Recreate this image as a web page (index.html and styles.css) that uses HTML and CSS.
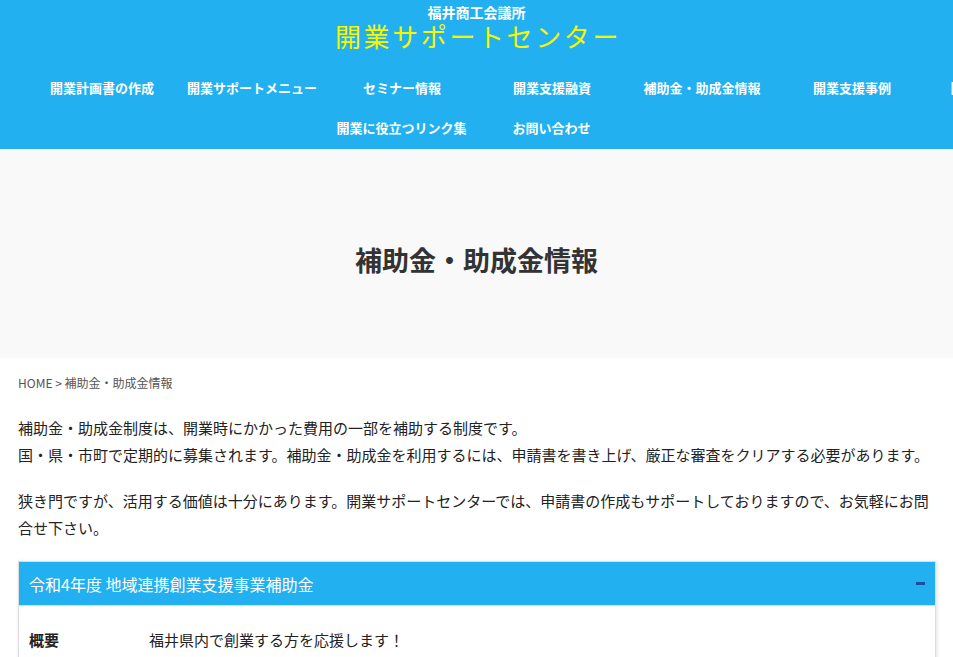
FILE: index.html
```html
<!DOCTYPE html>
<html lang="ja">
<head>
<meta charset="utf-8">
<title>補助金・助成金情報 | 開業サポートセンター</title>
<link rel="stylesheet" href="styles.css">
</head>
<body>
<header class="site-header">
  <div class="brand">
    <div class="brand-org">福井商工会議所</div>
    <div class="brand-title">開業サポートセンター</div>
  </div>
  <nav class="gnav">
    <ul class="gnav-row gnav-row-first">
      <li>開業計画書の作成</li>
      <li>開業サポートメニュー</li>
      <li>セミナー情報</li>
      <li>開業支援融資</li>
      <li>補助金・助成金情報</li>
      <li>開業支援事例</li>
      <li>開業スケジュール</li>
    </ul>
    <ul class="gnav-row gnav-row-second">
      <li>開業に役立つリンク集</li>
      <li>お問い合わせ</li>
    </ul>
  </nav>
</header>

<section class="hero">
  <h1 class="hero-title">補助金・助成金情報</h1>
</section>

<main class="content">
  <div class="breadcrumb">HOME &gt; 補助金・助成金情報</div>
  <p class="lead">補助金・助成金制度は、開業時にかかった費用の一部を補助する制度です。<br>国・県・市町で定期的に募集されます。補助金・助成金を利用するには、申請書を書き上げ、厳正な審査をクリアする必要があります。</p>
  <p class="lead">狭き門ですが、活用する価値は十分にあります。開業サポートセンターでは、申請書の作成もサポートしておりますので、お気軽にお問合せ下さい。</p>

  <div class="accordion">
    <div class="accordion-head">
      <span class="accordion-title">令和4年度 地域連携創業支援事業補助金</span>
      <span class="accordion-toggle"></span>
    </div>
    <div class="accordion-body">
      <div class="info-row">
        <div class="info-label">概要</div>
        <div class="info-value">福井県内で創業する方を応援します！</div>
      </div>
    </div>
  </div>
</main>
</body>
</html>
```

FILE: styles.css
```css
html, body {
  margin: 0;
  padding: 0;
}
body {
  font-family: "Noto Sans CJK JP", "Noto Sans", sans-serif;
  color: #222;
  background: #fff;
  overflow-x: hidden;
  width: 953px;
}
.site-header {
  background: #23b0f0;
  height: 149px;
  overflow: hidden;
}
.brand {
  text-align: center;
  padding-top: 4px;
}
.brand-org {
  color: #fff;
  font-weight: bold;
  font-size: 14px;
  line-height: 16px;
}
.brand-title {
  color: #f6f600;
  font-size: 26px;
  line-height: 28px;
  margin-top: 2px;
  letter-spacing: 2.6px;
  padding-left: 3px;
}
.gnav {
  margin-top: 18px;
}
.gnav-row {
  list-style: none;
  margin: 0;
  padding: 0;
  display: flex;
  flex-wrap: nowrap;
}
.gnav-row li {
  flex: 0 0 150px;
  height: 40px;
  line-height: 40px;
  text-align: center;
  color: #fff;
  font-weight: bold;
  font-size: 13px;
  white-space: nowrap;
}
.gnav-row-first {
  padding-left: 27px;
}
.gnav-row-second {
  justify-content: center;
}
.hero {
  background: #f9f9f9;
  height: 209px;
  display: flex;
  align-items: center;
  justify-content: center;
}
.hero-title {
  margin: 0;
  font-size: 27px;
  font-weight: bold;
  color: #333;
  padding-top: 12px;
}
.content {
  padding: 18px 17px 0 18px;
}
.breadcrumb {
  font-size: 12px;
  line-height: 14px;
  color: #555;
}
.lead {
  font-size: 15px;
  line-height: 27px;
  margin: 24px 0 0;
}
.lead + .lead {
  margin-top: 19px;
}
.accordion {
  margin-top: 20px;
  border: 1px solid #ddd;
  box-shadow: 1px 1px 4px rgba(0, 0, 0, 0.12);
}
.accordion-head {
  background: #23b0f0;
  height: 43px;
  display: flex;
  align-items: center;
  justify-content: space-between;
  padding: 0 10px 0 10px;
  border-bottom: 1px solid #ddd;
}
.accordion-title {
  color: #fff;
  font-size: 16px;
}
.accordion-toggle {
  width: 9px;
  height: 3px;
  background: #1c4f9f;
}
.accordion-body {
  padding: 20px 10px 20px 10px;
}
.info-row {
  display: flex;
  font-size: 15px;
  line-height: 27px;
}
.info-label {
  flex: 0 0 120px;
  font-weight: bold;
}
.info-value {
  flex: 1;
}
```
